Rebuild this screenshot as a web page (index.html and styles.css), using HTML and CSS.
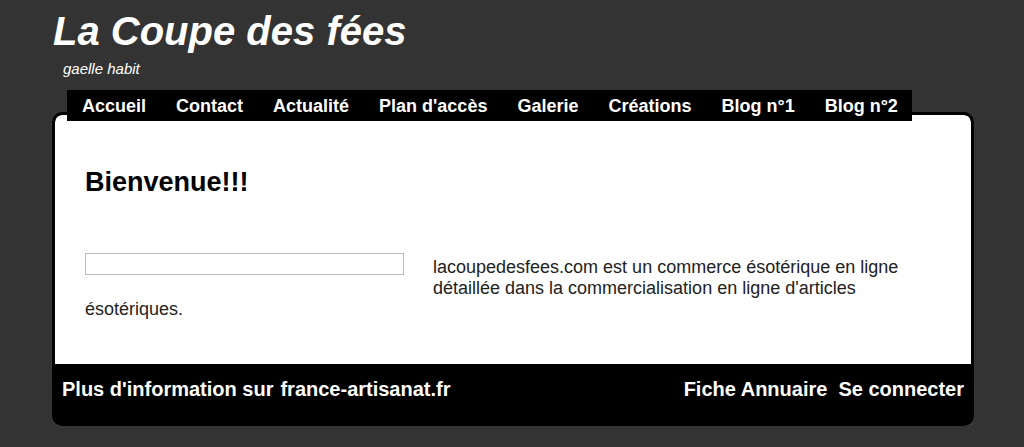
FILE: index.html
```html
<!DOCTYPE html>
<html lang="fr">
<head>
<meta charset="utf-8">
<title>La Coupe des fées</title>
<link rel="stylesheet" href="styles.css">
</head>
<body>
<div class="page">
  <header class="header">
    <h1 class="site-title">La Coupe des fées</h1>
    <p class="site-subtitle">gaelle habit</p>
  </header>
  <nav class="nav">
    <a href="#">Accueil</a>
    <a href="#">Contact</a>
    <a href="#">Actualité</a>
    <a href="#">Plan d'accès</a>
    <a href="#">Galerie</a>
    <a href="#">Créations</a>
    <a href="#">Blog n°1</a>
    <a href="#">Blog n°2</a>
  </nav>
  <div class="box">
    <main class="content">
      <h2 class="welcome">Bienvenue!!!</h2>
      <p class="intro"><span class="frame"></span>lacoupedesfees.com est un commerce ésotérique en ligne détaillée dans la commercialisation en ligne d'articles ésotériques.</p>
    </main>
    <footer class="footer">
      <div class="footer-left">
        <span>Plus d'information sur</span>
        <a href="#">france-artisanat.fr</a>
      </div>
      <div class="footer-right">
        <a href="#">Fiche Annuaire</a>
        <a href="#">Se connecter</a>
      </div>
    </footer>
  </div>
</div>
</body>
</html>
```

FILE: styles.css
```css
html, body {
  margin: 0;
  padding: 0;
  background: #333333;
  font-family: "Liberation Sans", Arial, sans-serif;
}

.page {
  width: 922px;
  margin-left: 52px;
  padding-top: 8px;
}

.site-title {
  margin: 0;
  font-size: 40px;
  line-height: 46px;
  font-weight: bold;
  font-style: italic;
  color: #ffffff;
  padding-left: 1px;
}

.site-subtitle {
  margin: 6px 0 0 11px;
  font-size: 15px;
  line-height: 17px;
  font-style: italic;
  color: #ffffff;
}

.nav {
  position: relative;
  z-index: 1;
  display: flex;
  width: 845px;
  height: 31px;
  margin: 13px 0 0 15px;
  background: #000000;
}

.nav a {
  padding: 2px 15px 0 15px;
  font-size: 18px;
  line-height: 29px;
  font-weight: bold;
  color: #ffffff;
  text-decoration: none;
  white-space: nowrap;
}

.box {
  margin-top: -9px;
  border: 3px solid #000000;
  border-radius: 10px;
  background: #000000;
  overflow: hidden;
  box-shadow: 0 1px 2px rgba(255, 255, 255, 0.08);
}

.content {
  background: #ffffff;
  padding: 53px 30px 44px 30px;
  border-radius: 7px 7px 0 0;
}

.welcome {
  margin: 0;
  font-size: 27px;
  line-height: 29px;
  font-weight: bold;
  color: #000000;
}

.intro {
  margin: 60px 0 0 0;
  font-size: 18px;
  line-height: 21px;
  color: #222222;
}

.frame {
  float: left;
  width: 317px;
  height: 20px;
  margin: -4px 29px 8px 0;
  border: 1px solid #bbbbbb;
}

.footer {
  display: flex;
  justify-content: space-between;
  padding: 14px 7px 22px 7px;
  font-size: 20px;
  line-height: 23px;
  font-weight: bold;
  color: #ffffff;
}

.footer a {
  color: #ffffff;
  text-decoration: none;
}

.footer-left {
  display: flex;
  gap: 7px;
}

.footer-right {
  display: flex;
  gap: 11px;
}
```
